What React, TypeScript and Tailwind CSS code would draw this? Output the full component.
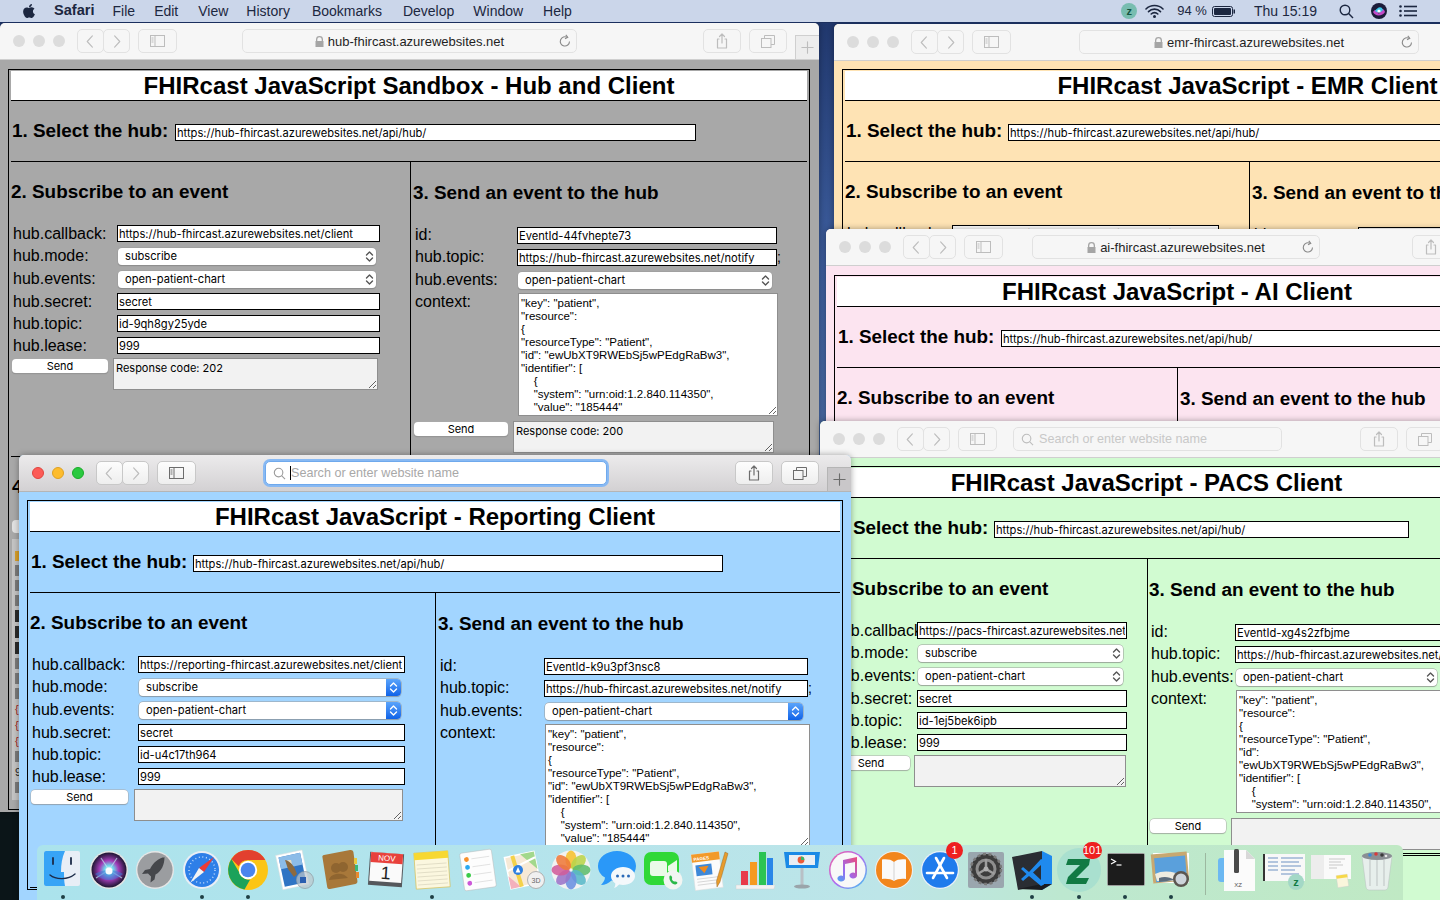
import React from "react";
import { FaApple } from "react-icons/fa";

type Win = {
  pos: string; bg: string; active?: boolean; address?: string; searchMl: string; searchW: string;
  pad: string; frameMl: string; frameW: string; title: string; hubW: string; hubInput: string;
  col1: string; lab1: string; in1: string; sel1: string; send1: string; resp1: string; gap1: string;
  lab2: string; in2: string; sel2: string; area2: string; send2: string; resp2: string; gap2: string; pl2: string;
  callback: string; eventId: string; topicId: string; secretResp?: string; ctx: string; section4?: boolean; resp2Text?: string;
};

const ctx = `"key": "patient",\n"resource":\n{\n"resourceType": "Patient",\n"id": "ewUbXT9RWEbSj5wPEdgRaBw3",\n"identifier": [\n    {\n    "system": "urn:oid:1.2.840.114350",\n    "value": "185444"\n    }\n]`;
const ctxPacs = `"key": "patient",\n"resource":\n{\n"resourceType": "Patient",\n"id":\n"ewUbXT9RWEbSj5wPEdgRaBw3",\n"identifier": [\n    {\n    "system": "urn:oid:1.2.840.114350",\n    "value": "185444"\n    }\n]`;

const windows: Win[] = [
  {
    pos: "left-[0px] top-[23px] w-[819px] h-[789px]", bg: "bg-[#a8a8a8]", address: "hub-fhircast.azurewebsites.net",
    searchMl: "ml-[65px]", searchW: "w-[335px]", pad: "pt-[9px]", frameMl: "ml-[8px]", frameW: "w-[802px]",
    title: "FHIRcast JavaScript Sandbox - Hub and Client", hubW: "w-[163px]", hubInput: "w-[521px]",
    col1: "w-[400px]", lab1: "w-[104px]", in1: "w-[263px]", sel1: "w-[258px]", send1: "w-[96px]", resp1: "w-[265px]", gap1: "ml-[5px]",
    pl2: "pl-[4px]", lab2: "w-[102px]", in2: "w-[260px]", sel2: "w-[254px]", area2: "w-[260px]", send2: "w-[94px]", resp2: "w-[261px]", gap2: "ml-[5px]",
    callback: "https://hub-fhircast.azurewebsites.net/client", eventId: "EventId-44fvhepte73", topicId: "id-9qh8gy25yde",
    secretResp: "Response code: 202", resp2Text: "Response code: 200", ctx, section4: true,
  },
  {
    pos: "left-[834px] top-[24px] w-[828px] h-[420px]", bg: "bg-[#fee3b4]", address: "emr-fhircast.azurewebsites.net",
    searchMl: "ml-[68px]", searchW: "w-[340px]", pad: "pt-[8px]", frameMl: "ml-[8px]", frameW: "w-[811px]",
    title: "FHIRcast JavaScript - EMR Client", hubW: "w-[162px]", hubInput: "w-[530px]",
    col1: "w-[405px]", lab1: "w-[105px]", in1: "w-[267px]", sel1: "w-[262px]", send1: "w-[97px]", resp1: "w-[269px]", gap1: "ml-[6px]",
    pl2: "pl-[4px]", lab2: "w-[104px]", in2: "w-[264px]", sel2: "w-[258px]", area2: "w-[265px]", send2: "w-[94px]", resp2: "w-[261px]", gap2: "ml-[5px]",
    callback: "https://emr-fhircast.azurewebsites.net/client", eventId: "EventId-7bn2xc4wq1", topicId: "id-3kd9fh2lq7", ctx,
  },
  {
    pos: "left-[826px] top-[229px] w-[702px] h-[300px]", bg: "bg-[#fce4f0]", address: "ai-fhircast.azurewebsites.net",
    searchMl: "ml-[29px]", searchW: "w-[288px]", pad: "pt-[9px]", frameMl: "ml-[8px]", frameW: "w-[686px]",
    title: "FHIRcast JavaScript - AI Client", hubW: "w-[163px]", hubInput: "w-[530px]",
    col1: "w-[341px]", lab1: "w-[105px]", in1: "w-[225px]", sel1: "w-[220px]", send1: "w-[97px]", resp1: "w-[225px]", gap1: "ml-[6px]",
    pl2: "pl-[4px]", lab2: "w-[104px]", in2: "w-[224px]", sel2: "w-[218px]", area2: "w-[225px]", send2: "w-[94px]", resp2: "w-[225px]", gap2: "ml-[5px]",
    callback: "https://ai-fhircast.azurewebsites.net/client", eventId: "EventId-2ty6mp8vz0", topicId: "id-8sn4bv1xc6", ctx,
  },
  {
    pos: "left-[820px] top-[421px] w-[656px] h-[500px]", bg: "bg-[#d1fbd1]",
    searchMl: "ml-[16px]", searchW: "w-[269px]", pad: "pt-[8px]", frameMl: "ml-[8px]", frameW: "w-[637px]",
    title: "FHIRcast JavaScript - PACS Client", hubW: "w-[162px]", hubInput: "w-[415px]",
    col1: "w-[317px]", lab1: "w-[84px]", in1: "w-[210px]", sel1: "w-[205px]", send1: "w-[78px]", resp1: "w-[212px]", gap1: "ml-[4px]",
    pl2: "pl-[3px]", lab2: "w-[84px]", in2: "w-[260px]", sel2: "w-[201px]", area2: "w-[260px]", send2: "w-[76px]", resp2: "w-[260px]", gap2: "ml-[5px]",
    callback: "https://pacs-fhircast.azurewebsites.net", eventId: "EventId-xg4s2zfbjme", topicId: "id-1ej5bek6ipb", ctx: ctxPacs,
  },
  {
    pos: "left-[19px] top-[455px] w-[832px] h-[470px]", bg: "bg-[#a2d5ff]", active: true,
    searchMl: "ml-[69px]", searchW: "w-[342px]", pad: "pt-[8px]", frameMl: "ml-[8px]", frameW: "w-[816px]",
    title: "FHIRcast JavaScript - Reporting Client", hubW: "w-[162px]", hubInput: "w-[530px]",
    col1: "w-[406px]", lab1: "w-[106px]", in1: "w-[267px]", sel1: "w-[262px]", send1: "w-[97px]", resp1: "w-[269px]", gap1: "ml-[6px]",
    pl2: "pl-[4px]", lab2: "w-[104px]", in2: "w-[264px]", sel2: "w-[258px]", area2: "w-[265px]", send2: "w-[94px]", resp2: "w-[261px]", gap2: "ml-[5px]",
    callback: "https://reporting-fhircast.azurewebsites.net/client", eventId: "EventId-k9u3pf3nsc8", topicId: "id-u4c17th964", ctx,
  },
];

function Chevrons({ active }: { active?: boolean }) {
  return (
    <svg width="9" height="13" viewBox="0 0 9 13" fill="none" stroke={active ? "#fff" : "#555"} strokeWidth="1.4" strokeLinecap="round" strokeLinejoin="round">
      <path d="M1.5 5 4.500 2 7.500 5" />
      <path d="M1.5 8 4.500 11 7.500 8" />
    </svg>
  );
}

function Select({ value, w, active, ml }: { value: string; w: string; active?: boolean; ml?: string }) {
  return (
    <div className={`${w} ${ml ?? ""} relative h-[17px] shrink-0 flex items-center rounded-[4px] bg-white pl-[7px] font-['Inter',sans-serif] text-[11.15px] text-black shadow-[0_0_0_0.5px_#999,0_1px_1px_rgba(0,0,0,0.25)]`}>
      <span>{value}</span>
      {active ? (
        <span className="absolute right-0 top-0 flex h-[17px] w-[15px] items-center justify-center rounded-r-[4px] bg-gradient-to-b from-[#5aa4fb] to-[#0d62e8]">
          <Chevrons active />
        </span>
      ) : (
        <span className="absolute right-[2px] top-[2px]">
          <Chevrons />
        </span>
      )}
    </div>
  );
}

function Field({ value, w, ml }: { value: string; w: string; ml?: string }) {
  return (
    <input
      readOnly
      value={value}
      className={`${w} ${ml ?? ""} h-[17px] shrink-0 border border-black bg-white px-[1px] font-['Inter',sans-serif] text-[11.15px] leading-[15px] text-black outline-none`}
    />
  );
}

function SendBtn({ w, ml }: { w: string; ml?: string }) {
  return (
    <button className={`${w} ${ml ?? ""} mt-[1px] h-[14px] shrink-0 rounded-[4px] bg-white text-center font-['Inter',sans-serif] text-[11px] leading-[13px] text-black shadow-[0_0_0_0.5px_#aaa,0_1px_1px_rgba(0,0,0,0.25)]`}>
      Send
    </button>
  );
}

function Area({ value, w, ml, h, gray }: { value: string; w: string; ml?: string; h: string; gray?: boolean }) {
  return (
    <textarea
      readOnly
      value={value}
      className={`${w} ${ml ?? ""} ${h} ${gray ? "bg-[#f2f2f2] font-['Inter',sans-serif] text-[11px]" : "bg-white text-[11.5px]"} block shrink-0 border border-[#8e8e8e] px-[2px] pb-[1px] pt-[3px] leading-[13px] text-black outline-none overflow-hidden`}
    />
  );
}

function Label({ children, w, up }: { children: React.ReactNode; w: string; up?: string }) {
  return <div className={`${w} ${up ?? ""} h-[17px] shrink-0 whitespace-nowrap text-[16px] leading-[17px] text-black`}>{children}</div>;
}

function ToolBtn({ children, active, w }: { children: React.ReactNode; active?: boolean; w: string }) {
  return (
    <div className={`${w} flex h-[24px] items-center justify-center rounded-[5px] border ${active ? "border-[#c8c8c8] bg-gradient-to-b from-[#fdfdfd] to-[#eeeeee]" : "border-[#e2e2e2]"}`}>
      {children}
    </div>
  );
}

function Glyph({ d, active, size = 14 }: { d: string; active?: boolean; size?: number }) {
  return (
    <svg width={size} height={size} viewBox="0 0 16 16" fill="none" stroke={active ? "#6c6c6c" : "#bdbdbd"} strokeWidth="1.2" strokeLinecap="round" strokeLinejoin="round">
      <path d={d} />
    </svg>
  );
}

function Toolbar({ win }: { win: Win }) {
  const a = win.active;
  const base = a ? "bg-gradient-to-b from-[#ecebec] to-[#d3d1d3] border-[#b5b5b5]" : "bg-[#f6f6f6] border-[#cfcfcf]";
  return (
    <div className={`relative flex h-[37px] items-center border-b ${base} pl-[13px] pr-[32px]`}>
      <div className="flex gap-[8px]">
        <span className={`h-[12px] w-[12px] rounded-full ${a ? "bg-[#fc5b57] border-[0.5px] border-[#e0443e]" : "bg-[#dcdcdc]"}`} />
        <span className={`h-[12px] w-[12px] rounded-full ${a ? "bg-[#fdbc2e] border-[0.5px] border-[#dea123]" : "bg-[#dcdcdc]"}`} />
        <span className={`h-[12px] w-[12px] rounded-full ${a ? "bg-[#2ac940] border-[0.5px] border-[#1aab29]" : "bg-[#dcdcdc]"}`} />
      </div>
      <div className="ml-[12px] flex">
        <ToolBtn w="w-[27px]" active={a}><Glyph d="M10 2 4.500 8 10 14" size={15} /></ToolBtn>
        <div className="-ml-[1px]"><ToolBtn w="w-[27px]" active={a}><Glyph d="M6 2 11.500 8 6 14" size={15} /></ToolBtn></div>
      </div>
      <div className="ml-[8px]">
        <ToolBtn w="w-[39px]" active={a}>
          <svg width="15" height="12" viewBox="0 0 15 12" fill="none" stroke={a ? "#6c6c6c" : "#bdbdbd"}>
            <rect x="0.5" y="0.5" width="14" height="11" />
            <path d="M5 0.5v11M1.500 3h2M1.500 5h2M1.500 7h2" />
          </svg>
        </ToolBtn>
      </div>
      {win.address ? (
        <div className={`${win.searchMl} ${win.searchW} relative flex h-[24px] items-center justify-center gap-[4px] rounded-[5px] border border-[#e2e2e2] bg-[#f6f6f6] pt-[1px] text-[13px] text-[#1f1f1f]`}>
          <svg width="9" height="11" viewBox="0 0 9 11" fill="#a5a5a5">
            <path d="M1 5V3.400a3.500 3.400 0 0 1 7 0V5h.5v6H.5V5zM2.300 5h4.400V3.400a2.200 2.200 0 0 0-4.400 0z" />
          </svg>
          <span>{win.address}</span>
          <span className="absolute right-[4px] top-[4px]">
            <svg width="14" height="14" viewBox="0 0 14 14" fill="none" stroke="#8a8a8a" strokeWidth="1.1">
              <path d="M11.500 7.500a4.600 4.600 0 1 1-2.200-4" />
              <path d="M7.800 0.800 9.800 3.400 7 4.800" />
            </svg>
          </span>
        </div>
      ) : win.active ? (
        <div className={`${win.searchMl} ${win.searchW} relative flex h-[24px] items-center rounded-[5px] border border-[#6fa9ec] bg-white pl-[7px] text-[12.6px] text-[#a8a8a8] shadow-[0_0_0_2px_#88b9f3]`}>
          <svg width="13" height="13" viewBox="0 0 14 14" fill="none" stroke="#9a9a9a" strokeWidth="1.2">
            <circle cx="6" cy="6" r="4.600" />
            <path d="M9.500 9.500 13 13" />
          </svg>
          <span className="ml-[4px] h-[14px] w-[1px] bg-black" />
          <span className="whitespace-nowrap">Search or enter website name</span>
        </div>
      ) : (
        <div className={`${win.searchMl} ${win.searchW} flex h-[24px] items-center rounded-[5px] border border-[#e2e2e2] bg-[#f6f6f6] pl-[7px] text-[12.6px] text-[#c8c8c8]`}>
          <svg width="13" height="13" viewBox="0 0 14 14" fill="none" stroke="#bdbdbd" strokeWidth="1.2">
            <circle cx="6" cy="6" r="4.600" />
            <path d="M9.500 9.500 13 13" />
          </svg>
          <span className="ml-[5px] whitespace-nowrap">Search or enter website name</span>
        </div>
      )}
      <div className="ml-auto flex gap-[8px]">
        <ToolBtn w="w-[38px]" active={a}>
          <Glyph active={a} size={16} d="M5 6H3.500v9h9V6H11M8 10V1M5.500 3.500 8 1l2.500 2.500" />
        </ToolBtn>
        <ToolBtn w="w-[38px]" active={a}>
          <svg width="14" height="13" viewBox="0 0 14 13" fill="none" stroke={a ? "#6c6c6c" : "#bdbdbd"}>
            <rect x="0.5" y="3.500" width="9.500" height="9" />
            <path d="M3.500 3.500v-3h10v9h-3.500" />
          </svg>
        </ToolBtn>
      </div>
      <div className={`absolute bottom-0 right-0 flex h-[24px] w-[24px] items-center justify-center border-l border-t ${a ? "border-[#b5b5b5] bg-[#c9c7c9]" : "border-[#cfcfcf] bg-[#ededed]"}`}>
        <Glyph d="M8 2v12M2 8h12" active={a} size={15} />
      </div>
    </div>
  );
}

function Section4() {
  const kinds = ["c", "g", "g", "g", "k", "k", "k", "g", "g", "g", "r", "r", "r", "g", "n", "g"];
  return (
    <div>
      <div className="h-[48px] pl-[1px] pt-[18px] text-[18.9px] font-bold leading-[23px] text-black">4. Event log</div>
      <div className="ml-[1px] mt-[15px] h-[13px] w-[96px] rounded-[4px] bg-[#e2e2e2]" />
      <div className="ml-[1px] mt-[6px] flex h-[261px] w-[760px] flex-col gap-[4px] bg-[#c4c4c4] pb-[8px] pl-[3px] pt-[12px] text-[11px] leading-[13px]">
        {kinds.map((k, i) => (
          <div key={i} className="h-[12px]">
            {k === "c" && <span className="block h-[10px] w-[8px] bg-[#d8a02a]" />}
            {k === "g" && <span className="block h-[11px] w-[8px] bg-[#7a7a7a]" />}
            {k === "k" && <span className="block h-[12px] w-[8px] bg-[#2a2a2a]" />}
            {k === "r" && <span className="text-[#9c1c1c]">{"{"}</span>}
            {k === "n" && <span className="text-[#222]">9</span>}
          </div>
        ))}
      </div>
      <div className="h-[8px]" />
    </div>
  );
}

function Window({ win }: { win: Win }) {
  const a = win.active;
  const h3 = "text-[18.9px] font-bold leading-[23px] text-black";
  return (
    <div className={`absolute ${win.pos} ${win.bg} overflow-hidden rounded-t-[5px] shadow-[0_0_6px_rgba(0,0,0,0.35)]`}>
      <Toolbar win={win} />
      <div className={`${win.pad} ${win.frameMl} ${win.frameW}`}>
        <div className="border border-black px-[2px] py-[1px]">
          <div className="flex h-[30px] items-center justify-center border-b border-black bg-white pt-[1px] text-[24px] font-bold leading-[28px] text-black">
            {win.title}
          </div>
          <div className="flex h-[61px] items-start border-b border-black pt-[18px]">
            <div className={`${win.hubW} shrink-0 whitespace-nowrap pl-[1px] ${h3}`}>1. Select the hub:</div>
            <Field w={win.hubInput} ml="mt-[5px] ml-[1px]" value="https://hub-fhircast.azurewebsites.net/api/hub/" />
          </div>
          <div className="flex h-[295px] border-b border-black">
            <div className={`${win.col1} shrink-0 border-r border-black pl-[1px]`}>
              <div className={`h-[63px] -ml-[1px] pt-[18px] ${h3}`}>2. Subscribe to an event</div>
              <div className="flex h-[22px] pl-[1px]"><Label w={win.lab1}>hub.callback:</Label><Field w={win.in1} value={win.callback} /></div>
              <div className="flex h-[23px] pl-[1px]"><Label w={win.lab1}>hub.mode:</Label><Select w={win.sel1} ml="ml-[1px] mt-[1px]" value="subscribe" active={a} /></div>
              <div className="flex h-[23px] pl-[1px]"><Label w={win.lab1}>hub.events:</Label><Select w={win.sel1} ml="ml-[1px] mt-[1px]" value="open-patient-chart" active={a} /></div>
              <div className="flex h-[22px] pl-[1px]"><Label w={win.lab1}>hub.secret:</Label><Field w={win.in1} value="secret" /></div>
              <div className="flex h-[22px] pl-[1px]"><Label w={win.lab1}>hub.topic:</Label><Field w={win.in1} value={win.topicId} /></div>
              <div className="flex h-[21px] pl-[1px]"><Label w={win.lab1}>hub.lease:</Label><Field w={win.in1} value="999" /></div>
              <div className="flex">
                <SendBtn w={win.send1} ml="" />
                <Area w={win.resp1} ml={win.gap1} h="h-[32px]" gray value={win.secretResp ?? ""} />
              </div>
            </div>
            <div className={`flex-1 ${win.pl2}`}>
              <div className={`h-[65px] pt-[19px] -ml-[2px] ${h3}`}>3. Send an event to the hub</div>
              <div className="flex h-[22px]"><Label w={win.lab2} up="-mt-[1px]">id:</Label><Field w={win.in2} value={win.eventId} /></div>
              <div className="flex h-[23px]"><Label w={win.lab2} up="-mt-[1px]">hub.topic:</Label><Field w={win.in2} value="https://hub-fhircast.azurewebsites.net/notify" /><span className="text-[14px] leading-[17px]">;</span></div>
              <div className="flex h-[21px]"><Label w={win.lab2} up="-mt-[1px]">hub.events:</Label><Select w={win.sel2} ml="ml-[1px]" value="open-patient-chart" active={a} /></div>
              <div className="flex h-[128px]">
                <Label w={win.lab2}>context:</Label>
                <Area w={win.area2} ml="ml-[1px]" h="h-[123px]" value={win.ctx} />
              </div>
              <div className="-ml-[1px] flex">
                <SendBtn w={win.send2} />
                <Area w={win.resp2} ml={win.gap2} h="h-[32px]" gray value={win.resp2Text ?? ""} />
              </div>
            </div>
          </div>
          {win.section4 && <Section4 />}
        </div>
      </div>
    </div>
  );
}

function MenuBar() {
  const items = [
    ["File", "ml-[18px]"], ["Edit", "ml-[19px]"], ["View", "ml-[20px]"], ["History", "ml-[18px]"],
    ["Bookmarks", "ml-[22px]"], ["Develop", "ml-[21px]"], ["Window", "ml-[19px]"], ["Help", "ml-[20px]"],
  ];
  return (
    <div className="absolute left-0 top-0 z-10 flex h-[23px] w-[1440px] items-center border-b border-[#1b2f5e] bg-[#cbd6ea] pl-[21px] pr-[23px] text-[14px] text-[#1c2740]">
      <FaApple className="text-[16px] text-[#1c2740]" />
      <span className="ml-[17px] text-[14.6px] font-bold">Safari</span>
      {items.map(([t, m]) => (
        <span key={t} className={m}>{t}</span>
      ))}
      <div className="ml-auto flex items-center">
        <span className="flex h-[16px] w-[16px] items-center justify-center rounded-full bg-[#78bdb0] text-[11px] font-bold text-[#14543f]">z</span>
        <svg className="ml-[8px]" width="19" height="14" viewBox="0 0 19 14" fill="none" stroke="#1c2740" strokeWidth="1.6" strokeLinecap="round">
          <path d="M1 5a12 12 0 0 1 17 0" />
          <path d="M3.500 7.600a8.400 8.400 0 0 1 12 0" />
          <path d="M6.200 10a4.600 4.600 0 0 1 6.600 0" />
          <circle cx="9.500" cy="12.400" r="0.7" fill="#1c2740" />
        </svg>
        <span className="ml-[13px] text-[13px]">94 %</span>
        <svg className="ml-[5px]" width="23" height="11" viewBox="0 0 23 11">
          <rect x="0.5" y="0.5" width="20" height="10" rx="2" fill="none" stroke="#1c2740" />
          <rect x="2" y="2" width="17" height="7" rx="1" fill="#1c2740" />
          <rect x="21.500" y="3.500" width="1.500" height="4" fill="#1c2740" />
        </svg>
        <span className="ml-[19px]">Thu 15:19</span>
        <svg className="ml-[22px]" width="15" height="15" viewBox="0 0 15 15" fill="none" stroke="#1c2740" strokeWidth="1.4">
          <circle cx="6" cy="6" r="4.800" />
          <path d="M9.600 9.600 14 14" />
        </svg>
        <svg className="ml-[17px]" width="16" height="16" viewBox="0 0 16 16">
          <circle cx="8" cy="8" r="8" fill="#1c1c3a" />
          <path d="M2 9c2-3 3-3 6 2 2-5 4-7 6-2-2 4-10 5-12 0z" fill="#c24cc8" />
          <path d="M4 8c2-3 6-6 8-1-2 3-6 3-8 1z" fill="#3cc7e8" />
          <circle cx="8" cy="8" r="1.600" fill="#fff" />
        </svg>
        <svg className="ml-[12px]" width="18" height="12" viewBox="0 0 18 12" fill="#1c2740">
          <circle cx="1.500" cy="1.500" r="1.300" /><circle cx="1.500" cy="6" r="1.300" /><circle cx="1.500" cy="10.500" r="1.300" />
          <rect x="5" y="0.7" width="13" height="1.600" /><rect x="5" y="5.200" width="13" height="1.600" /><rect x="5" y="9.700" width="13" height="1.600" />
        </svg>
      </div>
    </div>
  );
}

/* ---- Dock icons ---- */
const I = ({ children, w = 44 }: { children: React.ReactNode; w?: number }) => (
  <svg width={w} height="44" viewBox={`0 0 ${w} 44`}>{children}</svg>
);

const Finder = () => (
  <I>
    <rect x="3" y="3" width="36" height="35" rx="2" fill="#e8eef6" />
    <path d="M5 3h19c-3 7-4 13-4 21h3c0 5 0 9 1 14H5a2 2 0 0 1-2-2V5a2 2 0 0 1 2-2z" fill="#37a4f6" />
    <path d="M12 10v6M30 10v6" stroke="#1c2b48" strokeWidth="1.800" strokeLinecap="round" />
    <path d="M9 27c6 5 18 5 25-1" stroke="#1c2b48" strokeWidth="1.400" fill="none" strokeLinecap="round" />
  </I>
);
const Siri = () => (
  <I>
    <defs>
      <radialGradient id="siriA" cx="0.5" cy="0.5" r="0.5">
        <stop offset="0" stopColor="#ffffff" />
        <stop offset="0.25" stopColor="#6fd8ec" />
        <stop offset="0.55" stopColor="#a23db8" />
        <stop offset="1" stopColor="#1c1430" />
      </radialGradient>
    </defs>
    <circle cx="22" cy="22" r="19" fill="#e4e4e4" />
    <circle cx="22" cy="22" r="17.500" fill="url(#siriA)" />
    <path d="M22 22 9 30M22 22 35 30M22 22 14 10M22 22 30 10" stroke="#bfe9f4" strokeWidth="1.200" opacity="0.7" />
    <path d="M8 26c5-3 9-4 14-4s9 1 14 4c-5 4-9 6-14 6s-9-2-14-6z" fill="#3a7fd8" opacity="0.55" />
    <circle cx="22" cy="23" r="3.500" fill="#fff" opacity="0.95" />
  </I>
);
const Launchpad = () => (
  <I>
    <circle cx="22" cy="22" r="19" fill="#e6e6e6" />
    <circle cx="22" cy="22" r="17.600" fill="#9b9da0" />
    <path d="M32 9c-7 1-12 6-15 12l-5 1-3 4 6-.5 3 3-.5 6 4-3 1-5c6-3 9-10 9-17.500z" fill="#45474b" />
  </I>
);
const Safari = () => (
  <I>
    <circle cx="22" cy="22" r="19" fill="#e9eef5" />
    <circle cx="22" cy="22" r="17" fill="#2e7fe8" />
    <circle cx="22" cy="22" r="13" fill="none" stroke="#bcd8fb" strokeWidth="1.500" strokeDasharray="1 2.600" />
    <path d="M34 9 19 20l5 4z" fill="#ee3b35" />
    <path d="M10 35l9-15 5 4z" fill="#f4f4f4" />
  </I>
);
const Chrome = () => (
  <I>
    <circle cx="22" cy="22" r="20" fill="#fbc516" />
    <path d="M22 2a20 20 0 0 1 17.300 10H22a10 10 0 0 0-9.300 6.200L5.400 11A20 20 0 0 1 22 2z" fill="#e2402f" />
    <path d="M5.400 11l7.600 13c1.500 4.800 6 8 11 7.800L18.500 41.600A20 20 0 0 1 5.400 11z" fill="#1ba25a" />
    <circle cx="22" cy="22" r="9.200" fill="#fff" />
    <circle cx="22" cy="22" r="7.300" fill="#4a85ee" />
  </I>
);
const Mail = () => (
  <I>
    <g transform="rotate(-12 22 22)">
      <rect x="7" y="4" width="27" height="35" fill="#fff" stroke="#ddd" strokeWidth="0.5" />
      <rect x="9.500" y="6.500" width="22" height="30" fill="#2f74c4" />
      <rect x="9.500" y="6.500" width="22" height="12" fill="#8cbce8" />
    </g>
    <path d="M13 12c6 1 9 6 12 14l-3 3-6-8z" fill="#8d6a3e" />
    <path d="M15 12l4 0 1 4z" fill="#e8dcc0" />
    <circle cx="33" cy="32" r="8.500" fill="rgba(190,200,205,0.7)" stroke="#8e9aa0" strokeWidth="0.7" />
    <rect x="28" y="29" width="6" height="6" fill="#2a5fb0" />
  </I>
);
const Contacts = () => (
  <I>
    <path d="M6 7 32 2c2-.3 3 .6 3.400 2l4 29c.2 1.500-.5 2.600-2 2.900L12 41c-1.500.2-2.500-.5-2.800-2L4.400 9c-.2-1 .4-1.800 1.600-2z" fill="#a8783a" />
    <rect x="36" y="10" width="3" height="6" fill="#e8c840" />
    <rect x="37" y="17" width="3" height="6" fill="#3ab878" />
    <rect x="38" y="24" width="3" height="6" fill="#e88a30" />
    <circle cx="18" cy="20" r="5" fill="#8f6530" />
    <circle cx="25" cy="19" r="5" fill="#8f6530" />
    <path d="M11 32c1-7 14-9 19-2z" fill="#8f6530" />
  </I>
);
const Calendar = () => (
  <I>
    <g transform="rotate(4 22 22)">
      <rect x="5" y="5" width="34" height="33" fill="#55585c" />
      <rect x="6" y="5" width="32" height="29" fill="#fafafa" />
      <rect x="6" y="5" width="32" height="10" fill="#e8413c" />
      <text x="22" y="13" fontSize="8" fill="#fff" textAnchor="middle" fontFamily="Liberation Sans">NOV</text>
      <text x="22" y="31" fontSize="18" fill="#222" textAnchor="middle" fontFamily="Liberation Sans">1</text>
    </g>
  </I>
);
const Notes = () => (
  <I>
    <g transform="rotate(-4 22 22)">
      <rect x="5" y="4" width="34" height="36" fill="#fbf7df" stroke="#d6bf58" strokeWidth="0.7" />
      <rect x="5" y="4" width="34" height="7" fill="#f7d832" />
      <path d="M7 16h30M7 20h30M7 24h30M7 28h30M7 32h30M7 36h30" stroke="#d8d4bc" strokeWidth="0.7" />
    </g>
  </I>
);
const Reminders = () => (
  <I>
    <g transform="rotate(-8 22 22)">
      <rect x="6" y="3" width="32" height="38" rx="2" fill="#fdfdfd" stroke="#bbb" strokeWidth="0.5" />
      <circle cx="12" cy="10" r="2.400" fill="#f8912c" /><circle cx="12" cy="18" r="2.400" fill="#2aa8f0" />
      <circle cx="12" cy="26" r="2.400" fill="#3acb48" /><circle cx="12" cy="34" r="2.400" fill="#cc58d8" />
      <path d="M17 10h18M17 18h18M17 26h18M17 34h18" stroke="#ddd" strokeWidth="0.8" />
    </g>
  </I>
);
const Maps = () => (
  <I>
    <g transform="rotate(-12 20 20)">
      <rect x="4" y="6" width="30" height="32" fill="#f6e9d6" stroke="#fff" strokeWidth="1.500" />
      <path d="M20 6h14v18z" fill="#a2d88c" />
      <path d="M4 25l10 13H4z" fill="#f4b0bc" />
      <path d="M12 6l3 32" stroke="#f4d24a" strokeWidth="4" />
      <path d="M4 20 34 12" stroke="#fff" strokeWidth="2" />
    </g>
    <circle cx="15" cy="22" r="5" fill="#2d7fe0" />
    <path d="M15 19l2.400 5.500H12.600z" fill="#fff" />
    <circle cx="33" cy="32" r="8.500" fill="#f0f0f0" stroke="#b0b0b0" />
    <text x="33" y="35" fontSize="7" fill="#666" textAnchor="middle" fontFamily="Liberation Sans">3D</text>
  </I>
);
const Photos = () => {
  const cs = ["#f6c02e", "#b9d44a", "#5fbc6c", "#58b8c8", "#6a8fe0", "#9a74c8", "#d05c9a", "#ee7a3a"];
  return (
    <I>
      <circle cx="22" cy="22" r="19.500" fill="#f2f2f2" />
      {cs.map((c, i) => (
        <ellipse key={c} cx="22" cy="11.500" rx="5.600" ry="9" fill={c} opacity="0.88" transform={`rotate(${i * 45} 22 22)`} />
      ))}
    </I>
  );
};
const Messages = () => (
  <I>
    <path d="M22 3c10.500 0 19 6.500 19 15s-8 15-19 15c-2 0-4-.2-5.600-.6C14 35 10 37 6 37c2-2 3.800-4.400 4-7.400C5.600 27 3 23 3 18 3 9.500 11.500 3 22 3z" fill="#2a98f8" />
    <path d="M28 19c7 0 12 4 12 9s-5 9-12 9c-1.400 0-2.600-.2-3.800-.5C22.500 38 21 39.500 19 40c1-1.500 1.400-3 1.300-4.600C17.500 33.500 16 31 16 28c0-5 5.500-9 12-9z" fill="#f4f8fb" />
    <circle cx="22.500" cy="28" r="1.500" fill="#2a6ab8" /><circle cx="28" cy="28" r="1.500" fill="#2a6ab8" /><circle cx="33.500" cy="28" r="1.500" fill="#2a6ab8" />
  </I>
);
const FaceTime = () => (
  <I>
    <rect x="3" y="4" width="35" height="33" rx="7" fill="#30d838" />
    <rect x="9" y="13" width="17" height="15" rx="3" fill="#eafae8" />
    <path d="M27 18l9-6v17l-9-6z" fill="#eafae8" />
    <circle cx="32" cy="32" r="9.500" fill="#f2f5f2" />
    <path d="M28.500 28c1-1 2-.5 2.500 1s-.5 1.500 0 2.500 1.500 2 2.500 2 1.500-.5 2.500.5 0 2-1.500 2.500c-3 .5-7-4-6-8.500z" fill="#2ab848" />
  </I>
);
const Pages = () => (
  <I>
    <g transform="rotate(-7 20 22)">
      <rect x="6" y="5" width="28" height="36" fill="#fbfbfb" stroke="#ddd" strokeWidth="0.5" />
      <rect x="6" y="5" width="28" height="8" fill="#f29a2a" />
      <text x="8" y="11.500" fontSize="4.500" fill="#fff" fontWeight="bold" fontFamily="Liberation Sans">PAGES</text>
      <rect x="9" y="16" width="16" height="11" fill="#3e88d8" />
      <path d="M12 18h10l-5 7z" fill="#f08a1e" />
      <path d="M9 30h22M9 33h22M9 36h22" stroke="#cfcfcf" strokeWidth="0.8" />
    </g>
    <path d="M38 4l3 1.500L33 34l-3 5-.5-6z" fill="#e89c2c" stroke="#8a5a18" strokeWidth="0.4" />
  </I>
);
const Numbers = () => (
  <I>
    <path d="M3 37h39l-1 4H3z" fill="#f2f2f2" stroke="#ccc" strokeWidth="0.4" />
    <rect x="8" y="23" width="7" height="14" fill="#e83a4a" />
    <rect x="17" y="14" width="7" height="23" fill="#f59a20" />
    <rect x="26" y="4" width="7" height="33" fill="#2cc454" />
    <rect x="34" y="10" width="6" height="27" fill="#2a86e8" />
  </I>
);
const Keynote = () => (
  <I>
    <path d="M4 4h36l-2 16H6z" fill="#1b8ae6" />
    <rect x="9" y="7" width="26" height="10" fill="#e8eef4" />
    <circle cx="21" cy="12" r="3.400" fill="#e85a3a" />
    <path d="M21 12V8.600a3.400 3.400 0 0 1 3.400 3.400z" fill="#3ab868" />
    <rect x="20.500" y="20" width="3" height="17" fill="#b8c0c6" />
    <ellipse cx="22" cy="38.500" rx="8" ry="2" fill="#9aa4aa" />
  </I>
);
const Music = () => (
  <I>
    <defs>
      <linearGradient id="mg" x1="0" y1="0" x2="1" y2="1">
        <stop offset="0" stopColor="#f25fa0" /><stop offset="0.5" stopColor="#b06af0" /><stop offset="1" stopColor="#3ec8f0" />
      </linearGradient>
      <linearGradient id="mn" x1="1" y1="0" x2="0" y2="1">
        <stop offset="0" stopColor="#f04a78" /><stop offset="0.6" stopColor="#9a6af0" /><stop offset="1" stopColor="#48a8f0" />
      </linearGradient>
    </defs>
    <circle cx="22" cy="22" r="19" fill="url(#mg)" />
    <circle cx="22" cy="22" r="17.500" fill="#f8f8f8" />
    <path d="M17 12 31 9v18.500a3.800 3 0 1 1-2-2.600V14l-10 2v14.500a3.800 3 0 1 1-2-2.600z" fill="url(#mn)" />
  </I>
);
const Books = () => (
  <I>
    <circle cx="22" cy="22" r="19" fill="#f0f0f0" />
    <circle cx="22" cy="22" r="18" fill="#f2861c" />
    <path d="M22 14c-3-2.500-7-3-12-2.500V31c5-.5 9 0 12 2 3-2 7-2.500 12-2V11.500c-5-.5-9 0-12 2.500z" fill="#fafafa" />
    <path d="M22 14v19" stroke="#c8c8c8" strokeWidth="0.8" />
  </I>
);
const AppStore = () => (
  <I>
    <circle cx="22" cy="22" r="19" fill="#eaf0f7" />
    <circle cx="22" cy="22" r="17.800" fill="#1f7bec" />
    <g stroke="#fff" strokeWidth="2.600" strokeLinecap="round" fill="none">
      <path d="M26 10 15 30" /><path d="M18 10 29 30" /><path d="M9 25h26" />
    </g>
  </I>
);
const Prefs = () => (
  <I>
    <rect x="4" y="4" width="36" height="36" rx="2" fill="#9aa6ae" />
    <circle cx="22" cy="21" r="15" fill="#3c3c3c" />
    <circle cx="22" cy="21" r="15" fill="none" stroke="#7a7a7a" strokeWidth="2.500" strokeDasharray="3 2.600" />
    <circle cx="22" cy="21" r="10.500" fill="#8e8e8e" />
    <circle cx="22" cy="21" r="7.500" fill="#3c3c3c" />
    <path d="M22 21V11M22 21l-8.500 5M22 21l8.500 5" stroke="#9e9e9e" strokeWidth="2.500" />
    <circle cx="22" cy="21" r="2.500" fill="#b0b0b0" />
  </I>
);
const VSCode = () => (
  <I>
    <path d="M2 9 32 3v34L8 42z" fill="#2a2d33" />
    <path d="M32 3l10 5v28l-10 6z" fill="#1f8aee" />
    <path d="M8 41 32 36l10 0-10 6z" fill="#1a1c20" />
    <path d="M31 11 19 24l-6-5-2 2 5.500 5L11 31l2 2 6-5 12 10 3-1.500V12.500zM31 17v15l-8-7.500z" fill="#1f8aee" />
  </I>
);
const Zulip = () => (
  <I>
    <circle cx="22" cy="22" r="22" fill="#a9e0cf" />
    <path d="M11 11h22l-1 6-13 13h13l-3 6H9l2-7 12-12H9z" fill="#117a44" />
  </I>
);
const Terminal = () => (
  <I>
    <rect x="4" y="5" width="38" height="33" rx="2" fill="#9c9c9c" />
    <rect x="5" y="6" width="36" height="31" fill="#1c1c1c" />
    <path d="M8 11l4.500 2.500L8 16" stroke="#fff" strokeWidth="1.200" fill="none" />
    <path d="M13.500 17h5" stroke="#fff" strokeWidth="1.200" />
  </I>
);
const Preview = () => (
  <I>
    <rect x="4" y="5" width="36" height="30" fill="#fff" />
    <rect x="3" y="5" width="36" height="29" fill="#c8a870" transform="rotate(-5 20 20)" />
    <rect x="6" y="9" width="31" height="24" fill="#5aa0dc" transform="rotate(-5 20 20)" />
    <path d="M6 26c8-4 18-3 30 2l1 5H8z" fill="#f0ece0" />
    <path d="M10 30c6-2 10-1 16 2l-16 2z" fill="#5d6c7c" />
    <circle cx="32" cy="31" r="8" fill="#5b5650" />
    <circle cx="32" cy="31" r="5.500" fill="#cdd4da" />
  </I>
);
const ArchiveFile = () => (
  <I>
    <rect x="1" y="10" width="30" height="24" rx="3" fill="#6cb8f2" />
    <path d="M7 2h22l9 9v32H7z" fill="#fbfbfb" />
    <path d="M29 2v9h9z" fill="#d8d8d8" />
    <rect x="17" y="1" width="5" height="24" rx="1.500" fill="#4a4a4a" />
    <text x="21" y="39" fontSize="6" fill="#555" textAnchor="middle" fontFamily="Liberation Sans">XZ</text>
  </I>
);
const Shot1 = () => (
  <I>
    <rect x="2" y="6" width="40" height="27" fill="#f8f8f8" />
    <rect x="0" y="6" width="2" height="27" fill="#333" />
    <path d="M5 10h10M5 14h10M5 18h10M5 22h10M18 10h22M18 14h18M18 18h20M18 22h14M18 26h18" stroke="#9cb4d4" strokeWidth="1.300" />
    <circle cx="33" cy="34" r="8" fill="#a3d8c6" />
    <text x="33" y="38" fontSize="11" fontWeight="bold" fill="#117a44" textAnchor="middle" fontFamily="Liberation Sans">z</text>
  </I>
);
const Shot2 = () => (
  <I>
    <rect x="2" y="7" width="40" height="24" fill="#fafafa" />
    <rect x="2" y="7" width="13" height="24" fill="#ededed" />
    <path d="M20 11h16M20 14h12M20 17h14M20 20h8" stroke="#bbb" strokeWidth="0.8" />
    <g transform="rotate(-8 33 33)">
      <rect x="28" y="27" width="11" height="12" fill="#faf6dc" stroke="#ccc" strokeWidth="0.4" />
      <rect x="28" y="27" width="11" height="3" fill="#f6d84a" />
    </g>
  </I>
);
const Trash = () => (
  <I>
    <path d="M7 8h30l-4 31c-.3 2-1.500 3-3 3H14c-1.500 0-2.700-1-3-3z" fill="rgba(235,240,240,0.9)" stroke="#b8bec0" strokeWidth="0.5" />
    <path d="M15 12v26M22 12v26M29 12v26" stroke="#c6cccc" strokeWidth="1.300" />
    <ellipse cx="22" cy="8" rx="15" ry="4" fill="#8a8f94" />
    <circle cx="15" cy="7" r="1.800" fill="#3a8ad8" /><circle cx="21" cy="6" r="1.800" fill="#d83a3a" /><circle cx="27" cy="7" r="1.800" fill="#3a3a3a" /><circle cx="31" cy="8" r="1.300" fill="#e8e8e8" />
  </I>
);

function Dot() {
  return <span className="absolute bottom-[1px] left-1/2 h-[4px] w-[4px] -translate-x-1/2 rounded-full bg-[#1f3f44]" />;
}
function Badge({ children, w }: { children: React.ReactNode; w: string }) {
  return <span className={`absolute -top-[3px] right-[0px] flex h-[17px] ${w} items-center justify-center rounded-full bg-[#ee2020] text-[11px] leading-none text-white`}>{children}</span>;
}
function Item({ children, dot, badge, badgeW }: { children: React.ReactNode; dot?: boolean; badge?: string; badgeW?: string }) {
  return (
    <div className="relative flex h-[55px] w-[46.17px] shrink-0 justify-center pt-[3px]">
      {children}
      {badge && <Badge w={badgeW ?? "w-[17px]"}>{badge}</Badge>}
      {dot && <Dot />}
    </div>
  );
}

function Dock() {
  return (
    <div className="absolute left-[37px] top-[845px] z-20 flex h-[55px] w-[1366px] rounded-t-[6px] bg-[linear-gradient(90deg,#abe3ec_0%,#b4e4ec_35%,#bde5e8_62%,#bde8d0_75%,#c0e9c4_100%)] pl-[3px]">
      <Item dot><Finder /></Item>
      <Item><Siri /></Item>
      <Item><Launchpad /></Item>
      <Item dot><Safari /></Item>
      <Item dot><Chrome /></Item>
      <Item><Mail /></Item>
      <Item><Contacts /></Item>
      <Item><Calendar /></Item>
      <Item dot><Notes /></Item>
      <Item><Reminders /></Item>
      <Item><Maps /></Item>
      <Item><Photos /></Item>
      <Item><Messages /></Item>
      <Item><FaceTime /></Item>
      <Item><Pages /></Item>
      <Item><Numbers /></Item>
      <Item><Keynote /></Item>
      <Item><Music /></Item>
      <Item><Books /></Item>
      <Item badge="1"><AppStore /></Item>
      <Item><Prefs /></Item>
      <Item dot><VSCode /></Item>
      <Item dot badge="101" badgeW="w-[19px]"><Zulip /></Item>
      <Item dot><Terminal /></Item>
      <Item dot><Preview /></Item>
      <div className="ml-[11px] mr-[10px] mt-[8px] h-[42px] w-[1px] bg-[#9cb8a0]" />
      <Item><ArchiveFile /></Item>
      <Item><Shot1 /></Item>
      <Item><Shot2 /></Item>
      <Item><Trash /></Item>
    </div>
  );
}

export default function App() {
  return (
    <div className="relative h-[900px] w-[1440px] overflow-hidden bg-[linear-gradient(180deg,#1e3469_0%,#3e5f9f_30%,#4c6da8_50%,#0b1518_90%)] font-['Liberation_Sans',Arial,sans-serif]">
      <MenuBar />
      {windows.map((w) => (
        <Window key={w.title} win={w} />
      ))}
      <Dock />
    </div>
  );
}
